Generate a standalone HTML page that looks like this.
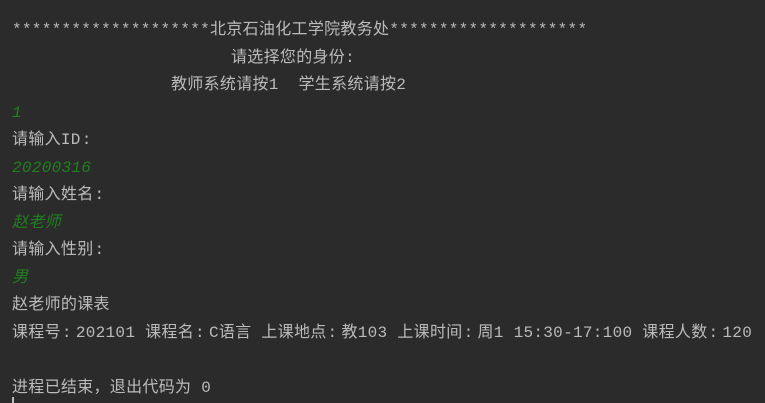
<!DOCTYPE html>
<html><head><meta charset="utf-8"><style>
html,body{margin:0;padding:0;background:#2b2b2b;width:765px;height:403px;overflow:hidden}
.c{position:absolute;left:12px;top:17px;font-family:"Liberation Mono","Noto Sans CJK SC",monospace;font-size:16px;line-height:27.5px;color:#bbbbbb;white-space:pre;letter-spacing:0.3px}
.c div{height:27.5px}
.k{margin-right:4px;margin-left:1px}
.g{color:#1f801f;font-style:italic}
.cur{position:absolute;left:12px;top:397px;width:2px;height:6px;background:#bbb}
</style></head><body>
<div class="c"><div>********************北京石油化工学院教务处********************</div><div style="padding-left:219px">请选择您的身份:</div><div style="padding-left:159px">教师系统请按1  学生系统请按2</div><div class="g">1</div><div>请输入ID<span class="k">:</span></div><div class="g">20200316</div><div>请输入姓名<span class="k">:</span></div><div class="g">赵老师</div><div>请输入性别<span class="k">:</span></div><div class="g">男</div><div>赵老师的课表</div><div>课程号<span class="k">:</span>202101 课程名<span class="k">:</span>C语言 上课地点<span class="k">:</span>教103 上课时间<span class="k">:</span>周1 15:30-17:100 课程人数<span class="k">:</span>120</div><div> </div><div>进程已结束，退出代码为 0</div></div>
<div class="cur"></div>
</body></html>
